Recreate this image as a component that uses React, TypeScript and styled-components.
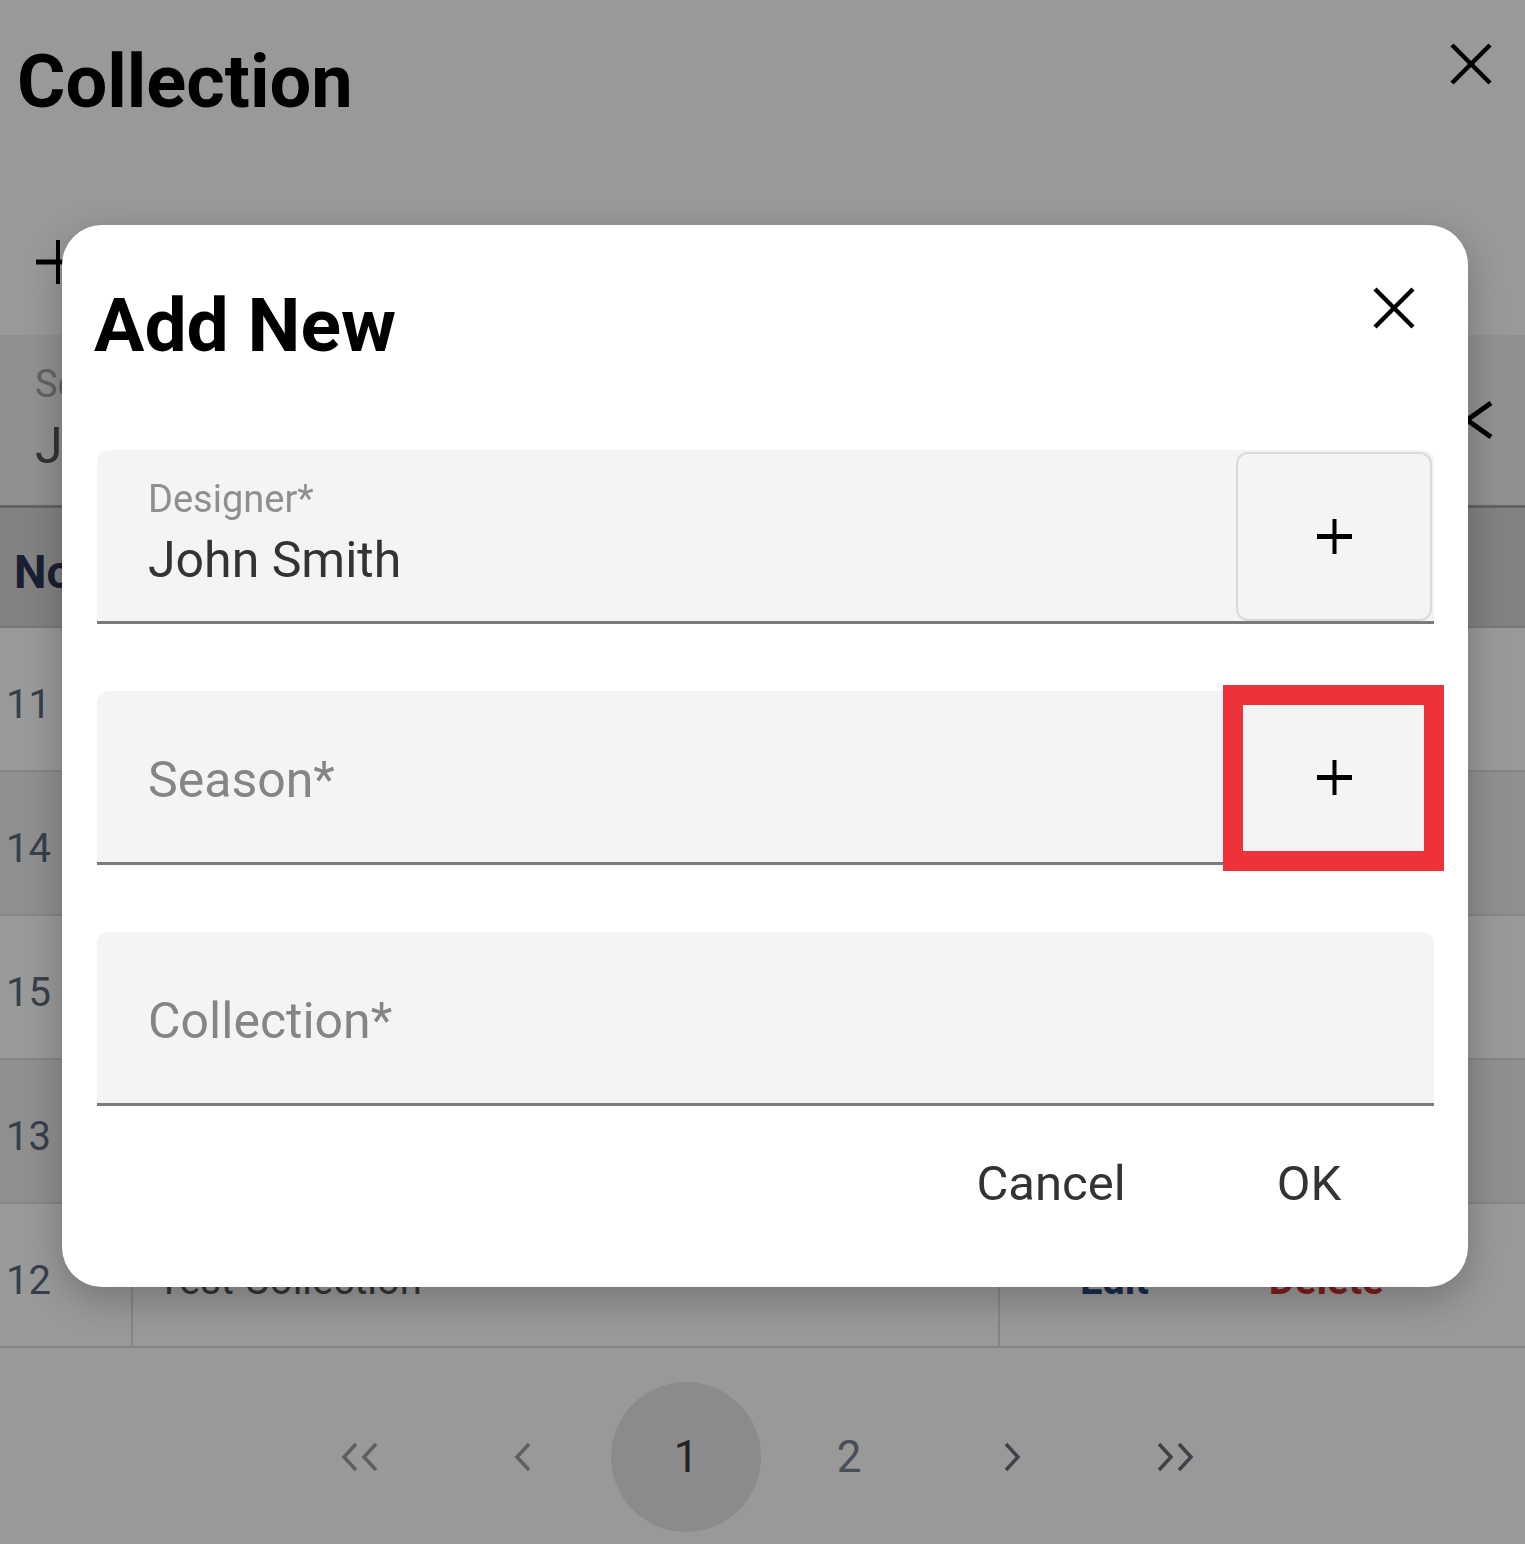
import React from "react"
import styled, {createGlobalStyle} from "styled-components"

const GlobalStyle = createGlobalStyle`
  html, body {
    margin: 0;
    padding: 0;
    background: #fff;
    overflow: hidden;
  }
  body {
    font-family: Roboto, "Liberation Sans", Arial, sans-serif;
  }
  * {
    box-sizing: border-box;
  }
`

const fieldBg = "#f4f4f4"
const rowLine = "#dedede"

/* ---------- page behind the dialog ---------- */

const Page = styled.div`
  width: 1525px;
  height: 1544px;
  display: flex;
  flex-direction: column;
  background: #fff;
`

const TitleBar = styled.header`
  height: 170px;
  display: flex;
  justify-content: space-between;
  align-items: flex-start;
  padding: 42px 32px 0 17px;
`

const PageTitle = styled.h1`
  margin: 3px 0 0;
  font-size: 74px;
  line-height: 1;
  font-weight: 700;
  color: #000;
`

const IconButton = styled.button`
  padding: 0;
  border: 0;
  background: none;
  color: #000;
  display: flex;
  cursor: pointer;
`

const Toolbar = styled.div`
  height: 165px;
  display: flex;
  align-items: flex-start;
  padding: 70px 0 0 36px;
`

const FilterBar = styled.div`
  height: 173px;
  background: #f1f1f1;
  border-bottom: 3px solid #a6a6a6;
  display: flex;
  align-items: center;
  justify-content: space-between;
  padding: 0 30px 0 35px;
`

const FilterField = styled.div`
  display: flex;
  flex-direction: column;
  gap: 18px;
  padding-bottom: 4px;
`

const FilterLabel = styled.span`
  font-size: 38px;
  line-height: 1;
  color: #a3a3a3;
`

const FilterValue = styled.span`
  font-size: 50px;
  line-height: 1;
  color: #555;
`

const TableRow = styled.div<{$head?: boolean; $alt?: boolean}>`
  display: grid;
  grid-template-columns: 133px 867px 1fr;
  height: ${p => (p.$head ? 120 : 144)}px;
  background: ${p => (p.$head ? "#d8d8d8" : p.$alt ? "#eeeeee" : "#fff")};
  border-bottom: 2px solid ${p => (p.$head ? "#c8c8c8" : rowLine)};
`

const Cell = styled.div<{$head?: boolean; $pad?: number}>`
  display: flex;
  align-items: center;
  gap: 120px;
  padding: 10px 0 0 ${p => p.$pad ?? 0}px;
  font-size: ${p => (p.$head ? 46 : 40)}px;
  font-weight: ${p => (p.$head ? 700 : 400)};
  color: ${p => (p.$head ? "#2b3553" : "#555")};
  border-right: 2px solid ${rowLine};
  &:last-child {
    border-right: 0;
  }
`

const NumberText = styled.span`
  color: #5b6b7c;
`

const ActionLink = styled.span<{$danger?: boolean}>`
  font-weight: 700;
  color: ${p => (p.$danger ? "#d32f2f" : "#2a4a7f")};
`

const Pagination = styled.nav`
  flex: 1;
  display: flex;
  justify-content: center;
  align-items: flex-start;
  gap: 13px;
  padding: 34px 0 0 10px;
`

const PageItem = styled.div<{$active?: boolean; $tone?: string}>`
  width: 150px;
  height: 150px;
  border-radius: 50%;
  display: flex;
  align-items: center;
  justify-content: center;
  font-size: 44px;
  background: ${p => (p.$active ? "#e8e8e8" : "transparent")};
  color: ${p => p.$tone ?? "#393939"};
`

/* ---------- dialog ---------- */

const Backdrop = styled.div`
  position: fixed;
  inset: 0;
  background: rgba(0, 0, 0, 0.4);
  display: flex;
  align-items: flex-start;
  padding: 225px 57px 0 62px;
`

const Dialog = styled.div`
  flex: 1;
  background: #fff;
  border-radius: 40px;
  padding: 61px 34px 74px 35px;
  box-shadow: 0 12px 40px rgba(0, 0, 0, 0.25);
  display: flex;
  flex-direction: column;
`

const DialogHeader = styled.div`
  height: 76px;
  display: flex;
  justify-content: space-between;
  align-items: flex-start;
`

const DialogTitle = styled.h2`
  margin: 2px 0 0 -3px;
  font-size: 75px;
  line-height: 1;
  font-weight: 700;
  color: #000;
`

const CloseButton = styled(IconButton)`
  margin-right: 18px;
`

const Fields = styled.div`
  margin-top: 88px;
  display: flex;
  flex-direction: column;
  gap: 67px;
`

const Field = styled.div`
  height: 174px;
  display: flex;
  background: ${fieldBg};
  border-bottom: 3px solid #7b7b7b;
  border-radius: 12px 12px 0 0;
`

const InputArea = styled.div<{$filled?: boolean}>`
  flex: 1;
  display: flex;
  flex-direction: column;
  justify-content: center;
  gap: 17px;
  padding: ${p => (p.$filled ? "0 0 6px 51px" : "6px 0 0 51px")};
`

const FloatLabel = styled.span`
  font-size: 38px;
  line-height: 1;
  color: #8f8f8f;
`

const InputValue = styled.span`
  font-size: 50px;
  line-height: 1;
  color: #333;
`

const Placeholder = styled.span`
  font-size: 50px;
  line-height: 1;
  color: #858585;
`

const AddSlot = styled.div`
  position: relative;
  width: 196px;
  margin: 2px 2px 0 0;
`

const AddButton = styled.button`
  width: 100%;
  height: 100%;
  border: 2px solid #dadada;
  border-radius: 12px;
  background: ${fieldBg};
  color: #000;
  display: flex;
  align-items: center;
  justify-content: center;
  padding: 0;
  cursor: pointer;
`

const Highlight = styled.div`
  position: absolute;
  top: -8px;
  bottom: -9px;
  left: -13px;
  right: -12px;
  border: 20px solid #ee3239;
  pointer-events: none;
`

const Actions = styled.div`
  margin-top: 47px;
  display: flex;
  justify-content: flex-end;
  gap: 8px;
`

const ActionButton = styled.button`
  width: 250px;
  height: 60px;
  padding: 0;
  border: 0;
  background: none;
  font-family: inherit;
  font-size: 49px;
  line-height: 1;
  color: #333;
  cursor: pointer;
`

/* ---------- icons ---------- */

const CloseIcon = () => (
  <svg width="44" height="44" viewBox="0 0 44 44" stroke="currentColor" strokeWidth="4.5" fill="none">
    <line x1="3" y1="3" x2="41" y2="41" />
    <line x1="41" y1="3" x2="3" y2="41" />
  </svg>
)

const PlusIcon = ({size, weight}: {size: number; weight: number}) => (
  <svg width={size} height={size} viewBox={`0 0 ${size} ${size}`} stroke="currentColor" strokeWidth={weight}>
    <line x1={size / 2} y1="0" x2={size / 2} y2={size} />
    <line x1="0" y1={size / 2} x2={size} y2={size / 2} strokeWidth={weight + 1} />
  </svg>
)

const BackChevron = () => (
  <svg width="34" height="40" viewBox="0 0 34 40" stroke="#000" strokeWidth="5" fill="none">
    <polyline points="30,3 6,20 30,37" />
  </svg>
)

const PageArrow = ({dir, double}: {dir: "left" | "right"; double?: boolean}) => {
  const one = dir === "left" ? "16,2 4,15 16,28" : "4,2 16,15 4,28"
  const two = dir === "left" ? "36,2 24,15 36,28" : "24,2 36,15 24,28"
  return (
    <svg width={double ? 40 : 20} height="30" viewBox={`0 0 ${double ? 40 : 20} 30`} stroke="currentColor" strokeWidth="3.5" fill="none">
      <polyline points={one} />
      {double && <polyline points={two} />}
    </svg>
  )
}

const rows = [
  {no: 11, name: "Spring"},
  {no: 14, name: "Summer"},
  {no: 15, name: "Autumn"},
  {no: 13, name: "Winter"},
  {no: 12, name: "Test Collection"}
]

const fields = [
  {label: "Designer*", value: "John Smith", addable: true},
  {label: "Season*", addable: true, highlighted: true},
  {label: "Collection*"}
]

export default function App() {
  return (
    <>
      <GlobalStyle />
      <Page>
        <TitleBar>
          <PageTitle>Collection</PageTitle>
          <IconButton>
            <CloseIcon />
          </IconButton>
        </TitleBar>
        <Toolbar>
          <PlusIcon size={44} weight={4} />
        </Toolbar>
        <FilterBar>
          <FilterField>
            <FilterLabel>Season</FilterLabel>
            <FilterValue>John Smith</FilterValue>
          </FilterField>
          <BackChevron />
        </FilterBar>
        <div>
          <TableRow $head>
            <Cell $head $pad={14}>No</Cell>
            <Cell $head />
            <Cell $head />
          </TableRow>
          {rows.map((row, i) => (
            <TableRow key={row.no} $alt={i % 2 === 1}>
              <Cell $pad={6}>
                <NumberText>{row.no}</NumberText>
              </Cell>
              <Cell $pad={24}>{row.name}</Cell>
              <Cell $pad={80}>
                <ActionLink>Edit</ActionLink>
                <ActionLink $danger>Delete</ActionLink>
              </Cell>
            </TableRow>
          ))}
        </div>
        <Pagination>
          <PageItem $tone="#9e9e9e">
            <PageArrow dir="left" double />
          </PageItem>
          <PageItem $tone="#9e9e9e">
            <PageArrow dir="left" />
          </PageItem>
          <PageItem $active>1</PageItem>
          <PageItem $tone="#7b848e">2</PageItem>
          <PageItem $tone="#666d78">
            <PageArrow dir="right" />
          </PageItem>
          <PageItem $tone="#666d78">
            <PageArrow dir="right" double />
          </PageItem>
        </Pagination>
      </Page>

      <Backdrop>
        <Dialog>
          <DialogHeader>
            <DialogTitle>Add New</DialogTitle>
            <CloseButton>
              <CloseIcon />
            </CloseButton>
          </DialogHeader>
          <Fields>
            {fields.map(f => (
              <Field key={f.label}>
                <InputArea $filled={!!f.value}>
                  {f.value ? (
                    <>
                      <FloatLabel>{f.label}</FloatLabel>
                      <InputValue>{f.value}</InputValue>
                    </>
                  ) : (
                    <Placeholder>{f.label}</Placeholder>
                  )}
                </InputArea>
                {f.addable && (
                  <AddSlot>
                    <AddButton>
                      <PlusIcon size={35} weight={4} />
                    </AddButton>
                    {f.highlighted && <Highlight />}
                  </AddSlot>
                )}
              </Field>
            ))}
          </Fields>
          <Actions>
            <ActionButton>Cancel</ActionButton>
            <ActionButton>OK</ActionButton>
          </Actions>
        </Dialog>
      </Backdrop>
    </>
  )
}
